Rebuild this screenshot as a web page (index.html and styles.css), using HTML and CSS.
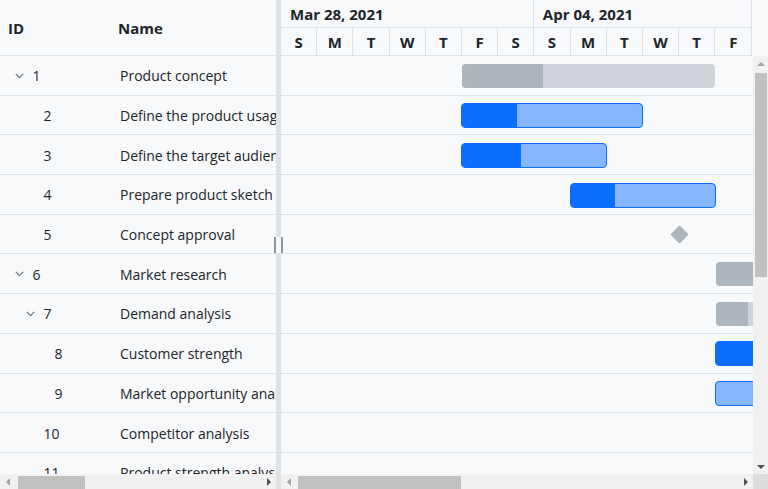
FILE: index.html
```html
<!DOCTYPE html>
<html lang="en">
<head>
<meta charset="utf-8">
<title>Gantt</title>
<link rel="stylesheet" href="styles.css">
</head>
<body>
<div class="app">
  <section class="left">
    <div class="grid-head">
      <div class="col-id">ID</div>
      <div class="col-name">Name</div>
    </div>
    <div class="grid-body">
      <div class="grow"><div class="cid l0"><span class="tog"><svg width="9" height="6" viewBox="0 0 9 6"><polyline points="0.8,0.8 4.5,4.6 8.2,0.8" fill="none" stroke="#6c757d" stroke-width="1.2"/></svg></span>1</div><div class="cname">Product concept</div></div>
      <div class="grow"><div class="cid l1"><span class="tog"></span>2</div><div class="cname">Define the product usage</div></div>
      <div class="grow"><div class="cid l1"><span class="tog"></span>3</div><div class="cname">Define the target audience</div></div>
      <div class="grow"><div class="cid l1"><span class="tog"></span>4</div><div class="cname">Prepare product sketch and notes</div></div>
      <div class="grow"><div class="cid l1"><span class="tog"></span>5</div><div class="cname">Concept approval</div></div>
      <div class="grow"><div class="cid l0"><span class="tog"><svg width="9" height="6" viewBox="0 0 9 6"><polyline points="0.8,0.8 4.5,4.6 8.2,0.8" fill="none" stroke="#6c757d" stroke-width="1.2"/></svg></span>6</div><div class="cname">Market research</div></div>
      <div class="grow"><div class="cid l1"><span class="tog"><svg width="9" height="6" viewBox="0 0 9 6"><polyline points="0.8,0.8 4.5,4.6 8.2,0.8" fill="none" stroke="#6c757d" stroke-width="1.2"/></svg></span>7</div><div class="cname">Demand analysis</div></div>
      <div class="grow"><div class="cid l2"><span class="tog"></span>8</div><div class="cname">Customer strength</div></div>
      <div class="grow"><div class="cid l2"><span class="tog"></span>9</div><div class="cname">Market opportunity analysis</div></div>
      <div class="grow"><div class="cid l1"><span class="tog"></span>10</div><div class="cname">Competitor analysis</div></div>
      <div class="grow"><div class="cid l1"><span class="tog"></span>11</div><div class="cname">Product strength analysis</div></div>
    </div>
    <div class="hscroll">
      <div class="sbtn"><span class="tri-left off"></span></div>
      <div class="htrack"><div class="hthumb left-thumb"></div></div>
      <div class="sbtn"><span class="tri-right"></span></div>
    </div>
  </section>

  <div class="splitter"><div class="handle"></div></div>

  <section class="right">
    <div class="tl-head">
      <div class="tl-cols">
        <div class="weeks">
          <div class="week w7">Mar 28, 2021</div>
          <div class="week w6">Apr 04, 2021</div>
        </div>
        <div class="days">
          <div class="day">S</div><div class="day">M</div><div class="day">T</div><div class="day">W</div><div class="day">T</div><div class="day">F</div><div class="day">S</div>
          <div class="day">S</div><div class="day">M</div><div class="day">T</div><div class="day">W</div><div class="day">T</div><div class="day">F</div>
        </div>
      </div>
    </div>
    <div class="tl-main">
      <div class="chart">
        <div class="crow"><div class="bar summary" style="left:181px;width:253.4px"><div class="prog" style="width:81px"></div></div></div>
        <div class="crow"><div class="bar task" style="left:180px;width:182px"><div class="prog" style="width:55px"></div></div></div>
        <div class="crow"><div class="bar task" style="left:180px;width:146px"><div class="prog" style="width:59px"></div></div></div>
        <div class="crow"><div class="bar task" style="left:289px;width:146px"><div class="prog" style="width:44px"></div></div></div>
        <div class="crow"><div class="milestone" style="left:391.5px"></div></div>
        <div class="crow"><div class="bar summary" style="left:434.7px;width:300px"><div class="prog" style="width:80px"></div></div></div>
        <div class="crow"><div class="bar summary" style="left:434.7px;width:200px"><div class="prog" style="width:32px"></div></div></div>
        <div class="crow"><div class="bar task" style="left:434px;width:200px"><div class="prog" style="width:100px"></div></div></div>
        <div class="crow"><div class="bar task" style="left:434px;width:200px"><div class="prog" style="width:0"></div></div></div>
        <div class="crow"></div>
        <div class="crow"></div>
      </div>
      <div class="vscroll">
        <div class="sbtn"><span class="tri-up off"></span></div>
        <div class="vtrack"><div class="vthumb"></div></div>
        <div class="sbtn"><span class="tri-down"></span></div>
      </div>
    </div>
    <div class="tl-foot">
      <div class="hscroll grow-x">
        <div class="sbtn"><span class="tri-left off"></span></div>
        <div class="htrack"><div class="hthumb right-thumb"></div></div>
        <div class="sbtn"><span class="tri-right"></span></div>
      </div>
      <div class="corner"></div>
    </div>
  </section>
</div>
</body>
</html>
```
FILE: styles.css
```css
* { box-sizing: border-box; }
html, body { margin: 0; padding: 0; }
body {
  background: #f8f9fa;
  color: #212529;
  font-family: "Open Sans", "Noto Sans", sans-serif;
  font-size: 14px;
}
.app {
  display: flex;
  width: 768px;
  height: 489px;
  overflow: hidden;
}

/* left grid */
.left {
  width: 276px;
  flex: none;
  display: flex;
  flex-direction: column;
  overflow: hidden;
}
.grid-head {
  height: 56px;
  flex: none;
  display: flex;
  align-items: center;
  border-bottom: 1px solid #dee2e6;
  font-weight: 700;
  font-size: 15px;
}
.col-id { width: 110px; padding-left: 8px; }
.col-name { padding-left: 8px; }
.grid-body {
  flex: 1;
  overflow: hidden;
}
.grow {
  height: 39.7px;
  display: flex;
  align-items: center;
  border-bottom: 1px solid #dee2e6;
  white-space: nowrap;
  padding-top: 1px;
}
.cid {
  width: 110px;
  flex: none;
  display: flex;
  align-items: center;
  padding-left: 15px;
}
.cid.l1 { padding-left: 26px; }
.cid.l2 { padding-left: 37px; }
.tog {
  width: 17.5px;
  flex: none;
  display: flex;
  align-items: center;
}
.tog svg { display: block; }
.cname { padding-left: 10px; }

/* splitter */
.splitter {
  width: 5px;
  flex: none;
  background: #dee2e6;
  position: relative;
}
.handle {
  position: absolute;
  left: -2px;
  top: 237px;
  width: 9px;
  height: 16px;
  background: #f8f9fa;
  border-left: 2px solid #8f969c;
  border-right: 2px solid #8f969c;
}

/* right timeline */
.right {
  flex: 1;
  display: flex;
  flex-direction: column;
  overflow: hidden;
}
.tl-head {
  height: 56px;
  flex: none;
  display: flex;
}
.tl-cols {
  width: 470.6px;
  flex: none;
  border-right: 1px solid #dee2e6;
  font-weight: 700;
  font-size: 15px;
}
.weeks, .days {
  display: flex;
  height: 28px;
  border-bottom: 1px solid #dee2e6;
}
.week {
  display: flex;
  align-items: center;
  padding-left: 9px;
  border-right: 1px solid #dee2e6;
}
.week.w7 { width: 253.4px; }
.week.w6 { width: 217.2px; border-right: none; }
.day {
  width: 36.2px;
  flex: none;
  display: flex;
  align-items: center;
  justify-content: center;
  border-right: 1px solid #dee2e6;
}
.day:last-child { border-right: none; }

.tl-main {
  flex: 1;
  display: flex;
  overflow: hidden;
}
.chart {
  flex: 1;
  overflow: hidden;
}
.crow {
  height: 39.7px;
  border-bottom: 1px solid #dee2e6;
  position: relative;
}
.bar {
  position: absolute;
  top: 7.5px;
  height: 25px;
  border-radius: 4px;
  overflow: hidden;
}
.bar .prog { height: 100%; }
.bar.summary { background: #ced4da; top: 8px; height: 24px; }
.bar.summary .prog { background: #adb5bd; }
.bar.task {
  background: #86b7fe;
  border: 1px solid #0d6efd;
}
.bar.task .prog { background: #0d6efd; }
.milestone {
  position: absolute;
  top: 13px;
  width: 13px;
  height: 13px;
  background: #adb5bd;
  transform: rotate(45deg);
  border-radius: 1px;
}

/* scrollbars */
.vscroll {
  width: 15px;
  flex: none;
  background: #f1f1f1;
  display: flex;
  flex-direction: column;
}
.sbtn {
  width: 15px;
  height: 15px;
  flex: none;
  display: flex;
  align-items: center;
  justify-content: center;
}
.vtrack { flex: 1; padding: 2px 1px 0 2px; }
.vthumb { height: 204px; background: #c1c1c1; }
.hscroll {
  height: 15px;
  flex: none;
  display: flex;
  background: #f1f1f1;
}
.htrack { flex: 1; padding: 2px 0 0 0; }
.hthumb { height: 13px; background: #c1c1c1; }
.left-thumb { width: 67px; margin-left: 3px; }
.right-thumb { width: 163px; margin-left: 2px; }
.tl-foot { height: 15px; flex: none; display: flex; }
.grow-x { flex: 1; }
.corner { width: 15px; flex: none; background: #dcdcdc; }

.tri-up, .tri-down, .tri-left, .tri-right { width: 0; height: 0; }
.tri-up { border-left: 4px solid transparent; border-right: 4px solid transparent; border-bottom: 4px solid #505050; }
.tri-down { border-left: 4px solid transparent; border-right: 4px solid transparent; border-top: 4px solid #505050; }
.tri-left { border-top: 4px solid transparent; border-bottom: 4px solid transparent; border-right: 4px solid #505050; }
.tri-right { border-top: 4px solid transparent; border-bottom: 4px solid transparent; border-left: 4px solid #505050; }
.tri-up.off { border-bottom-color: #a3a3a3; }
.tri-left.off { border-right-color: #a3a3a3; }
```
